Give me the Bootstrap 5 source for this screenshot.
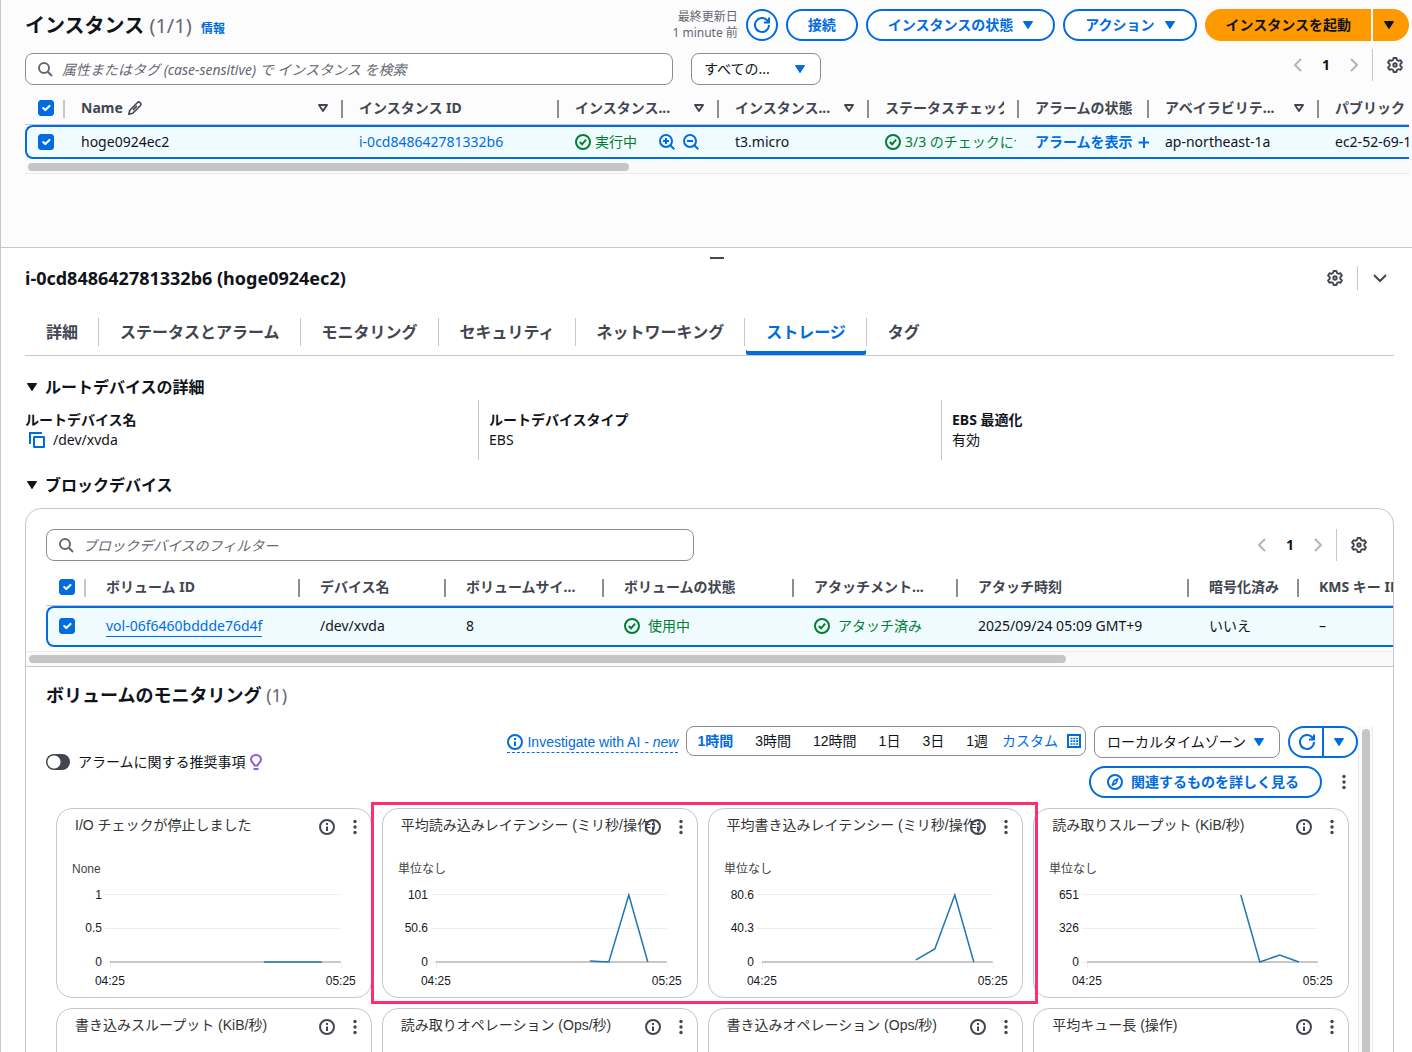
<!DOCTYPE html>
<html lang="ja">
<head>
<meta charset="utf-8">
<meta name="viewport" content="width=device-width, initial-scale=1">
<title>インスタンス | EC2</title>
<link href="https://cdn.jsdelivr.net/npm/bootstrap@5.3.0/dist/css/bootstrap.min.css" rel="stylesheet">
<style>
:root{--blue:#006ce0;--ink:#0f141a;--sub:#424650;--muted:#656871;--line:#c6c6cd;--edge:#8c8c94;--green:#00802f}
body{font-family:"Noto Sans","Noto Sans CJK JP",sans-serif;font-size:14px;line-height:20px;color:var(--ink);background:#fff;height:100vh;overflow:hidden;border-left:1px solid var(--line)}
h1,h2,h3,p{margin:0}
svg{display:block;flex:none}
a{color:var(--blue);text-decoration:none}
button{font-family:inherit}
.ico{width:16px;height:16px;fill:none;stroke:currentColor;stroke-width:2}
.tri{width:10px;height:8px;fill:currentColor}
.top-pane{background:#fcfcfd;padding:9px 3px 73px 24px;border-bottom:1px solid var(--line)}
.page-title{font-size:20px;line-height:24px;font-weight:700}
.count{font-weight:400;color:var(--muted)}
.info-link{font-size:12px;font-weight:700}
.updated{font-size:12px;line-height:16px;color:var(--muted);text-align:right}
.pill{height:32px;border:2px solid var(--blue);border-radius:16px;background:#fff;color:var(--blue);font-size:14px;line-height:20px;font-weight:700;padding:0 20px;gap:10px;display:inline-flex;align-items:center;white-space:nowrap}
.pill-round{width:32px;padding:0;justify-content:center}
.pill-pair{gap:2px}
.pill-main{background:#f90;border:0;color:var(--ink);padding:0 20px 0 21px;border-radius:16px 0 0 16px}
.pill-drop{background:#f90;border:0;color:var(--ink);width:36px;padding:0 0 0 11px;border-radius:0 16px 16px 0}
.search{position:relative;width:648px}
.search .ico{position:absolute;left:12px;top:8px;color:var(--muted)}
.search input{width:100%;height:32px;border:1px solid var(--edge);border-radius:8px;background:#fff;padding:0 12px 0 36px;font-size:14px;line-height:20px;color:var(--ink)}
.search input::placeholder{color:var(--muted);font-style:italic;opacity:1}
.picker{position:relative}
.picker select{appearance:none;width:100%;height:32px;border:1px solid var(--edge);border-radius:8px;background:#fff;padding:0 12px;font-size:14px;line-height:20px;color:var(--ink)}
.picker .tri{position:absolute;right:16px;top:12px;color:var(--blue);pointer-events:none}
.picker-state{width:130px;margin-left:18px}
.picker-zone{width:186px}
.picker-zone select{font-family:"Liberation Sans","Noto Sans CJK JP",sans-serif}
.pager{height:32px}
.pager button,.bare{border:0;background:none;padding:0;color:var(--sub);display:flex;align-items:center;justify-content:center}
.pager .step{width:28px;color:#b4b4bb}
.pager .now{color:var(--ink);font-size:14px;font-weight:700}
.pager .prefs{margin:0 6px 0 14px}
.vline{width:1px;background:var(--line);align-self:stretch}
.grid-table{table-layout:fixed;width:100%;border-collapse:separate;border-spacing:0}
.grid-table th,.grid-table td{padding:0 0 0 16px;white-space:nowrap;overflow:hidden}
.grid-table th{padding-bottom:1px;color:var(--sub);font-weight:700;border-bottom:1px solid var(--line);background:linear-gradient(var(--edge),var(--edge)) right center/2px 18px no-repeat}
.grid-table th:first-child{background-image:linear-gradient(var(--line),var(--line))}
.grid-table th:last-child{background:none}
.grid-table td{background:#f0fbff;border-top:2px solid var(--blue);border-bottom:2px solid var(--blue)}
.grid-table td:first-child{border-left:2px solid var(--blue);border-radius:8px 0 0 8px}
.grid-table th:first-child{padding-left:13px}
.grid-table td:first-child{padding-left:11px}
.inst th{height:32px}.inst td{height:34px}
.vols th{height:36px;padding-bottom:2px}.vols td{height:41px;padding-bottom:2px}
.vols th:not(:first-child),.vols td:not(:first-child){padding-left:20px}
.hd{display:flex;align-items:center;justify-content:space-between;padding-right:15px;overflow:hidden}
.hd>span{overflow:hidden}
.ok{color:var(--green)}
.clip{overflow:hidden;margin-right:3px}
.zooms{margin-left:18px}
.form-check-input.tick[type=checkbox]{display:block;width:16px;height:16px;margin:0;border-radius:3px;background-size:14px}
.form-check-input.tick:checked{background-color:var(--blue);border-color:var(--blue)}
.hscroll{height:15px;background:#fafafa;border-bottom:1px solid #ebebf0;padding:4px 3px}
.hscroll-card{height:16px;padding-top:3px;border-top:1px solid #ebebf0;border-bottom-color:var(--line)}
.thumb{height:8px;border-radius:4px;background:#c5c5c5}
.detail{padding:0 18px 0 24px}
.handle{height:18px;margin-right:-15px;padding-top:2px}
.handle i{width:14px;height:2px;background:var(--sub)}
.detail-title{font-size:18px;line-height:24px;font-weight:700}
.detail-tools{gap:14px;padding-right:6px}
.tabs{border-bottom:1px solid var(--line);height:48px;margin:18px 0 21px;list-style:none;padding:0 0 0 1px}
.tabs li{display:flex;align-items:center}
.tabs li+li::before{content:"";width:1px;height:28px;background:var(--line);margin-right:1px}
.tabs button{border:0;background:none;padding:0 20px;height:47px;color:var(--sub);font-size:16px;line-height:20px;font-weight:700}
.tabs .active button{color:var(--blue);box-shadow:inset 0 -4px 0 var(--blue);border-radius:0 0 2px 2px}
.sec-head{font-size:16px;line-height:20px;font-weight:700;gap:8px;padding-left:2px}
.facts{--bs-gutter-x:20px;margin-top:3px;margin-bottom:15px}
.facts>div{height:60px;padding-top:10px}
.facts>div+div{border-left:1px solid var(--line)}
.facts dt,.facts dd{margin:0;line-height:20px}
.panel{border:1px solid var(--line);border-radius:16px 16px 0 0;margin-top:13px;overflow:hidden;min-height:600px}
.panel-tools{padding:20px 20px 9px}
.panel-table{padding:0 0 4px 20px}
.underlined{border-bottom:1px solid var(--blue);padding-bottom:1px}
.sub-title{font-size:18px;line-height:24px;font-weight:700;margin:16px 0 19px 20px}
.monitor{padding-left:20px;padding-right:20px}
.monitor-body{min-width:0}
.vscroll{width:15px;border-left:1px solid #ebebf0;border-right:1px solid #ebebf0;background:#fafafa;padding:3px 2px 0 3px}
.vscroll i{display:block;width:8px;height:100%;border-radius:4px;background:#c5c5c5}
.cw{font-family:"Liberation Sans","Noto Sans CJK JP",sans-serif}
.flip{appearance:none;width:24px;height:16px;border-radius:8px;margin:0;background:radial-gradient(circle at 8px 8px,#fff 6px,transparent 7px) var(--sub)}
.invest{border-bottom:1px dashed var(--blue);gap:4px;white-space:nowrap}
.range{height:30px;border:1px solid var(--edge);border-radius:8px;background:#fff;padding:0 3px 0 0}
.range button{border:0;background:none;padding:0 11px;font-size:14px;line-height:20px;color:var(--ink);white-space:nowrap}
.range .active{color:var(--blue);font-weight:700;padding-left:10px}
.range .custom{color:var(--blue);padding:0;margin-left:3px;gap:8px}
.pill-left{width:36px;padding:0 0 0 2px;justify-content:center;border-radius:16px 0 0 16px}
.pill-right{width:34px;padding:0 3px 0 0;justify-content:center;border-left:0;border-radius:0 16px 16px 0}
.pill-related{padding:0 21px 0 16px;gap:8px}
.related-row{gap:14px;padding-right:6px}
.charts{position:relative;display:grid;grid-template-columns:repeat(4,minmax(0,1fr));gap:10px;margin:10px 9px 0 10px}
.chart{border:1px solid var(--line);border-radius:16px;height:190px;background:#fff}
.chart header{height:38px;padding:0 8px 0 18px}
.chart h3{font-size:14px;line-height:20px;font-weight:400;color:#333;white-space:nowrap;flex:1;min-width:0;padding-top:6px}
.chart .acts{gap:12px;padding-top:10px}
.chart>svg{width:100%;height:150px}
.chart text{font-size:12px;fill:#16191f}
.chart .unit{fill:#444}
.chart .rule{stroke:#eee;fill:none}
.chart .axis{stroke:#c8c8c8;stroke-width:2;fill:none}
.chart .data{stroke:#1f77b4;stroke-width:1.5;fill:none}
.callout{position:absolute;left:calc(25% - 8px);right:calc(25% - 12px);top:-6px;height:202px;border:3px solid #ff2e6c;pointer-events:none}
</style>
<script src="https://cdn.jsdelivr.net/npm/bootstrap@5.3.0/dist/js/bootstrap.bundle.min.js" defer></script>
</head>
<body class="d-flex flex-column">
<svg class="d-none" aria-hidden="true">
  <symbol id="tri" viewBox="0 0 10 8"><path d="M.7 0h8.6c.6 0 .8.5.5.9L5.6 7.4a.7.7 0 0 1-1.2 0L.2.9C-.1.5.1 0 .7 0z"/></symbol>
  <symbol id="sort" viewBox="0 0 10 8"><path d="M1 1h8L5 7z" fill="none" stroke="currentColor" stroke-width="1.900" stroke-linejoin="round"/></symbol>
  <symbol id="search" viewBox="0 0 16 16"><circle cx="7" cy="7" r="5"/><path d="m10.800 10.800 4.200 4.200"/></symbol>
  <symbol id="refresh" viewBox="0 0 16 16"><path d="M15 8a7 7 0 1 1-1.600-4.500L15 5.500M10 5.500h5V.5"/></symbol>
  <symbol id="gear" viewBox="0 0 16 16"><path d="M6 3 6.600 1h2.800L10 3l1.300.8 2.200-.6 1.400 2.400L13.300 7.200v1.600l1.600 1.600-1.400 2.400-2.200-.6L10 13l-.6 2H6.600L6 13l-1.300-.8-2.200.6-1.400-2.400 1.600-1.600V7.200L1.100 5.600l1.400-2.400 2.200.6z" stroke-linejoin="round" stroke-width="1.900"/><circle cx="8" cy="8" r="1.700" stroke-width="1.900"/></symbol>
  <symbol id="left" viewBox="0 0 16 16"><path d="M11 2 5 8l6 6"/></symbol>
  <symbol id="right" viewBox="0 0 16 16"><path d="m5 2 6 6-6 6"/></symbol>
  <symbol id="okay" viewBox="0 0 16 16"><circle cx="8" cy="8" r="7"/><path d="m4.800 8 2.300 2.300 4-4.600"/></symbol>
  <symbol id="info" viewBox="0 0 16 16"><circle cx="8" cy="8" r="7"/><path d="M8 12V7.500M8 6V4"/></symbol>
  <symbol id="dots" viewBox="0 0 16 16"><g fill="currentColor" stroke="none"><circle cx="8" cy="2.500" r="1.700"/><circle cx="8" cy="8" r="1.700"/><circle cx="8" cy="13.500" r="1.700"/></g></symbol>
</svg>

<section class="top-pane">
  <div class="d-flex align-items-center gap-2">
    <h1 class="page-title me-auto pt-1">インスタンス <span class="count">(1/1)</span> <a href="#" class="info-link ms-1">情報</a></h1>
    <div class="updated">最終更新日<br>1 minute 前</div>
    <button class="pill pill-round" aria-label="更新"><svg class="ico"><use href="#refresh"/></svg></button>
    <button class="pill">接続</button>
    <button class="pill">インスタンスの状態<svg class="tri"><use href="#tri"/></svg></button>
    <button class="pill">アクション<svg class="tri"><use href="#tri"/></svg></button>
    <div class="d-flex pill-pair">
      <button class="pill pill-main">インスタンスを起動</button>
      <button class="pill pill-drop" aria-label="起動オプション"><svg class="tri"><use href="#tri"/></svg></button>
    </div>
  </div>
  <div class="d-flex mt-2 mb-2">
    <div class="search mt-1"><svg class="ico"><use href="#search"/></svg><input type="text" aria-label="インスタンスを検索" placeholder="属性またはタグ (case-sensitive) で インスタンス を検索"></div>
    <div class="picker picker-state mt-1"><select aria-label="状態"><option>すべての...</option></select><svg class="tri"><use href="#tri"/></svg></div>
    <div class="pager d-flex ms-auto">
      <button class="step" aria-label="前へ"><svg class="ico"><use href="#left"/></svg></button>
      <button class="step now">1</button>
      <button class="step me-1" aria-label="次へ"><svg class="ico"><use href="#right"/></svg></button>
      <span class="vline"></span>
      <button class="prefs" aria-label="設定"><svg class="ico"><use href="#gear"/></svg></button>
    </div>
  </div>
  <table class="grid-table inst">
    <colgroup><col width="40"><col width="278"><col width="216"><col width="160"><col width="150"><col width="150"><col width="130"><col width="170"><col></colgroup>
    <thead><tr>
      <th><input class="form-check-input tick" type="checkbox" checked aria-label="すべて選択"></th>
      <th><div class="hd"><span class="d-flex align-items-center gap-1">Name <svg class="ico" viewBox="0 0 16 16"><path d="M1.800 14.200l1-4L10.500 2.500a1.700 1.700 0 0 1 2.400 0l.6.6a1.700 1.700 0 0 1 0 2.400L5.800 13.200zM6 9.900l4-4" stroke-width="1.600" stroke-linejoin="round"/></svg></span><svg class="tri"><use href="#sort"/></svg></div></th>
      <th>インスタンス ID</th>
      <th><div class="hd"><span>インスタンス...</span><svg class="tri"><use href="#sort"/></svg></div></th>
      <th><div class="hd"><span>インスタンス...</span><svg class="tri"><use href="#sort"/></svg></div></th>
      <th><div class="hd"><span>ステータスチェック</span></div></th>
      <th>アラームの状態</th>
      <th><div class="hd"><span>アベイラビリテ...</span><svg class="tri"><use href="#sort"/></svg></div></th>
      <th>パブリック</th>
    </tr></thead>
    <tbody><tr>
      <td><input class="form-check-input tick" type="checkbox" checked aria-label="hoge0924ec2 を選択"></td>
      <td>hoge0924ec2</td>
      <td><a href="#">i-0cd848642781332b6</a></td>
      <td><div class="d-flex align-items-center gap-1"><svg class="ico ok"><use href="#okay"/></svg><span class="ok">実行中</span>
        <span class="zooms d-flex gap-2"><a href="#" aria-label="フィルターに追加"><svg class="ico" viewBox="0 0 16 16"><circle cx="7" cy="7" r="6"/><path d="m11.300 11.300 4 4M7 4v6M4 7h6"/></svg></a>
        <a href="#" aria-label="フィルターから除外"><svg class="ico" viewBox="0 0 16 16"><circle cx="7" cy="7" r="6"/><path d="m11.300 11.300 4 4M4 7h6"/></svg></a></span></div></td>
      <td>t3.micro</td>
      <td><div class="clip d-flex align-items-center gap-1 ok"><svg class="ico"><use href="#okay"/></svg><span>3/3 のチェックに合格しました</span></div></td>
      <td><a href="#" class="d-flex align-items-center fw-bold gap-1">アラームを表示 <svg class="ico" viewBox="0 0 16 16"><path d="M7 3v11M1.500 8.500h11"/></svg></a></td>
      <td>ap-northeast-1a</td>
      <td>ec2-52-69-1</td>
    </tr></tbody>
  </table>
  <div class="hscroll"><div class="thumb" style="width:43.6%"></div></div>
</section>

<section class="detail flex-grow-1 overflow-hidden">
  <div class="handle d-flex align-items-center justify-content-center"><i></i></div>
  <div class="d-flex align-items-center">
    <h2 class="detail-title me-auto">i-0cd848642781332b6 (hoge0924ec2)</h2>
    <div class="detail-tools d-flex align-self-stretch">
      <button class="bare" aria-label="設定"><svg class="ico"><use href="#gear"/></svg></button>
      <span class="vline"></span>
      <button class="bare" aria-label="閉じる"><svg class="ico" viewBox="0 0 16 16"><path d="m2 5 6 6 6-6"/></svg></button>
    </div>
  </div>
  <ul class="tabs d-flex">
    <li><button>詳細</button></li><li><button>ステータスとアラーム</button></li><li><button>モニタリング</button></li><li><button>セキュリティ</button></li><li><button>ネットワーキング</button></li><li class="active"><button>ストレージ</button></li><li><button>タグ</button></li>
  </ul>
  <h3 class="sec-head d-flex align-items-center"><svg class="tri"><use href="#tri"/></svg>ルートデバイスの詳細</h3>
  <dl class="row facts">
    <div class="col-4"><dt>ルートデバイス名</dt><dd class="d-flex align-items-center gap-2 ps-1"><svg class="ico" viewBox="0 0 16 16" color="#006ce0"><path d="M5 5h10v10H5z" stroke-linejoin="round"/><path d="M1 12V1h12"/></svg>/dev/xvda</dd></div>
    <div class="col-4"><dt>ルートデバイスタイプ</dt><dd>EBS</dd></div>
    <div class="col-4"><dt>EBS 最適化</dt><dd>有効</dd></div>
  </dl>
  <h3 class="sec-head d-flex align-items-center"><svg class="tri"><use href="#tri"/></svg>ブロックデバイス</h3>

  <div class="panel">
    <div class="panel-tools d-flex">
      <div class="search"><svg class="ico"><use href="#search"/></svg><input type="text" aria-label="ブロックデバイスのフィルター" placeholder="ブロックデバイスのフィルター"></div>
      <div class="pager d-flex ms-auto">
        <button class="step" aria-label="前へ"><svg class="ico"><use href="#left"/></svg></button>
        <button class="step now">1</button>
        <button class="step me-1" aria-label="次へ"><svg class="ico"><use href="#right"/></svg></button>
        <span class="vline"></span>
        <button class="prefs" aria-label="設定"><svg class="ico"><use href="#gear"/></svg></button>
      </div>
    </div>
    <div class="panel-table">
      <table class="grid-table vols">
        <colgroup><col width="40"><col width="214"><col width="146"><col width="158"><col width="190"><col width="164"><col width="231"><col width="110"><col></colgroup>
        <thead><tr>
          <th><input class="form-check-input tick" type="checkbox" checked aria-label="すべて選択"></th>
          <th>ボリューム ID</th><th>デバイス名</th><th>ボリュームサイ...</th><th>ボリュームの状態</th><th>アタッチメント...</th><th>アタッチ時刻</th><th>暗号化済み</th><th>KMS キー ID</th>
        </tr></thead>
        <tbody><tr>
          <td><input class="form-check-input tick" type="checkbox" checked aria-label="ボリュームを選択"></td>
          <td><a href="#" class="underlined">vol-06f6460bddde76d4f</a></td><td>/dev/xvda</td><td>8</td>
          <td><div class="d-flex align-items-center gap-2 ok"><svg class="ico"><use href="#okay"/></svg>使用中</div></td>
          <td><div class="d-flex align-items-center gap-2 ok"><svg class="ico"><use href="#okay"/></svg>アタッチ済み</div></td>
          <td>2025/09/24 05:09 GMT+9</td><td>いいえ</td><td>–</td>
        </tr></tbody>
      </table>
    </div>
    <div class="hscroll hscroll-card"><div class="thumb" style="width:76.2%"></div></div>

    <h2 class="sub-title">ボリュームのモニタリング <span class="count">(1)</span></h2>
    <div class="monitor d-flex cw">
      <div class="monitor-body flex-grow-1">
        <div class="d-flex align-items-center">
          <label class="d-flex align-items-center gap-2 me-1"><input class="flip" type="checkbox" role="switch">アラームに関する推奨事項</label>
          <svg width="12" height="16" viewBox="0 0 12 16" fill="none" stroke="#8b5cd6" stroke-width="2"><path d="M4.500 11.500C4.500 9.500 1 8.500 1 5.500a5 4.500 0 0 1 10 0c0 3-3.500 4-3.500 6zM3.500 15h5"/></svg>
          <div class="d-flex flex-column align-items-end gap-2 ms-auto">
            <div class="d-flex gap-2">
              <a href="#" class="invest d-flex align-items-center align-self-center"><svg class="ico"><use href="#info"/></svg><span>Investigate with AI - <em>new</em></span></a>
              <div class="range d-flex align-items-center" role="group" aria-label="期間">
                <button class="active">1時間</button><button>3時間</button><button>12時間</button><button>1日</button><button>3日</button><button>1週</button>
                <button class="custom d-flex align-items-center">カスタム<svg class="ico" viewBox="0 0 16 16"><path d="M2 2h12v12H2z"/><path d="M4.500 5.500h2m.8 0h2m.8 0h2M4.500 8.200h2m.8 0h2m.8 0h2M4.500 11h2m.8 0h2m.8 0h2" stroke-width="1.700"/></svg></button>
              </div>
              <div class="picker picker-zone"><select aria-label="タイムゾーン"><option>ローカルタイムゾーン</option></select><svg class="tri"><use href="#tri"/></svg></div>
              <div class="d-flex"><button class="pill pill-left" aria-label="更新"><svg class="ico"><use href="#refresh"/></svg></button><button class="pill pill-right" aria-label="更新間隔"><svg class="tri"><use href="#tri"/></svg></button></div>
            </div>
            <div class="related-row d-flex align-items-center">
              <button class="pill pill-related"><svg class="ico" viewBox="0 0 16 16"><circle cx="8" cy="8" r="7"/><path d="M10.800 4.800 9 9.200 5.200 11.200 7 6.800z" stroke-width="1.600" stroke-linejoin="round"/></svg>関連するものを詳しく見る</button>
              <button class="bare" aria-label="メニュー"><svg class="ico"><use href="#dots"/></svg></button>
            </div>
          </div>
        </div>

        <div class="charts">
          <article class="chart"><header class="d-flex"><h3>I/O チェックが停止しました</h3><div class="acts d-flex align-items-start"><button class="bare" aria-label="情報"><svg class="ico"><use href="#info"/></svg></button><button class="bare" aria-label="メニュー"><svg class="ico"><use href="#dots"/></svg></button></div></header>
            <svg viewBox="0 0 314 150"><text class="unit" x="15" y="26">None</text><path class="rule" d="M48 47.500h236M48 81.500h236M48 115.500h5M53.500 116v5M284.500 116v5"/><path class="axis" d="M53 115h231"/><g text-anchor="end"><text x="45" y="52">1</text><text x="45" y="85">0.5</text><text x="45" y="119">0</text></g><g text-anchor="middle"><text x="53" y="138">04:25</text><text x="284" y="138">05:25</text></g><path class="data" d="M207 115h58"/></svg></article>
          <article class="chart"><header class="d-flex"><h3>平均読み込みレイテンシー (ミリ秒/操作)</h3><div class="acts d-flex align-items-start"><button class="bare" aria-label="情報"><svg class="ico"><use href="#info"/></svg></button><button class="bare" aria-label="メニュー"><svg class="ico"><use href="#dots"/></svg></button></div></header>
            <svg viewBox="0 0 314 150"><text class="unit" x="15" y="26">単位なし</text><path class="rule" d="M48 47.500h236M48 81.500h236M48 115.500h5M53.500 116v5M284.500 116v5"/><path class="axis" d="M53 115h231"/><g text-anchor="end"><text x="45" y="52">101</text><text x="45" y="85">50.6</text><text x="45" y="119">0</text></g><g text-anchor="middle"><text x="53" y="138">04:25</text><text x="284" y="138">05:25</text></g><path class="data" d="M207 114l19 1 20-67 19 67"/></svg></article>
          <article class="chart"><header class="d-flex"><h3>平均書き込みレイテンシー (ミリ秒/操作)</h3><div class="acts d-flex align-items-start"><button class="bare" aria-label="情報"><svg class="ico"><use href="#info"/></svg></button><button class="bare" aria-label="メニュー"><svg class="ico"><use href="#dots"/></svg></button></div></header>
            <svg viewBox="0 0 314 150"><text class="unit" x="15" y="26">単位なし</text><path class="rule" d="M48 47.500h236M48 81.500h236M48 115.500h5M53.500 116v5M284.500 116v5"/><path class="axis" d="M53 115h231"/><g text-anchor="end"><text x="45" y="52">80.6</text><text x="45" y="85">40.3</text><text x="45" y="119">0</text></g><g text-anchor="middle"><text x="53" y="138">04:25</text><text x="284" y="138">05:25</text></g><path class="data" d="M207 113l19-11 20-54 19 67"/></svg></article>
          <article class="chart"><header class="d-flex"><h3>読み取りスループット (KiB/秒)</h3><div class="acts d-flex align-items-start"><button class="bare" aria-label="情報"><svg class="ico"><use href="#info"/></svg></button><button class="bare" aria-label="メニュー"><svg class="ico"><use href="#dots"/></svg></button></div></header>
            <svg viewBox="0 0 314 150"><text class="unit" x="15" y="26">単位なし</text><path class="rule" d="M48 47.500h236M48 81.500h236M48 115.500h5M53.500 116v5M284.500 116v5"/><path class="axis" d="M53 115h231"/><g text-anchor="end"><text x="45" y="52">651</text><text x="45" y="85">326</text><text x="45" y="119">0</text></g><g text-anchor="middle"><text x="53" y="138">04:25</text><text x="284" y="138">05:25</text></g><path class="data" d="M207 48l19 67 20-7 19 7"/></svg></article>
          <article class="chart"><header class="d-flex"><h3>書き込みスループット (KiB/秒)</h3><div class="acts d-flex align-items-start"><button class="bare" aria-label="情報"><svg class="ico"><use href="#info"/></svg></button><button class="bare" aria-label="メニュー"><svg class="ico"><use href="#dots"/></svg></button></div></header></article>
          <article class="chart"><header class="d-flex"><h3>読み取りオペレーション (Ops/秒)</h3><div class="acts d-flex align-items-start"><button class="bare" aria-label="情報"><svg class="ico"><use href="#info"/></svg></button><button class="bare" aria-label="メニュー"><svg class="ico"><use href="#dots"/></svg></button></div></header></article>
          <article class="chart"><header class="d-flex"><h3>書き込みオペレーション (Ops/秒)</h3><div class="acts d-flex align-items-start"><button class="bare" aria-label="情報"><svg class="ico"><use href="#info"/></svg></button><button class="bare" aria-label="メニュー"><svg class="ico"><use href="#dots"/></svg></button></div></header></article>
          <article class="chart"><header class="d-flex"><h3>平均キュー長 (操作)</h3><div class="acts d-flex align-items-start"><button class="bare" aria-label="情報"><svg class="ico"><use href="#info"/></svg></button><button class="bare" aria-label="メニュー"><svg class="ico"><use href="#dots"/></svg></button></div></header></article>
          <div class="callout"></div>
        </div>
      </div>
      <div class="vscroll"><i></i></div>
    </div>
  </div>
</section>
</body>
</html>
